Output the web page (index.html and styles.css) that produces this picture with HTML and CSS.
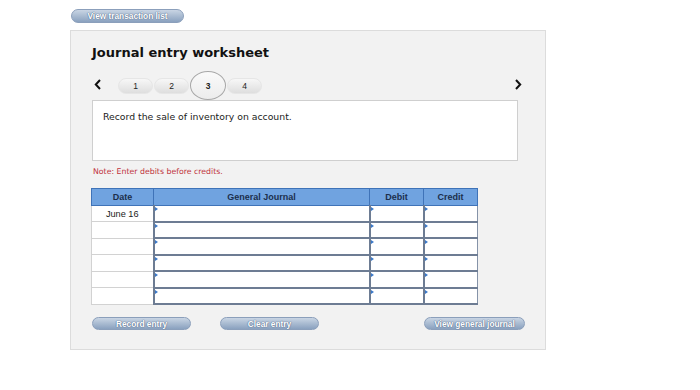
FILE: index.html
```html
<!DOCTYPE html>
<html>
<head>
<meta charset="utf-8">
<link rel="stylesheet" href="styles.css">
</head>
<body>
<div class="top">
  <span class="pill-btn top-btn">View transaction list</span>
</div>
<div class="panel">
  <h1 class="title">Journal entry worksheet</h1>
  <div class="nav">
    <svg class="chev" width="8" height="11" viewBox="0 0 8 11"><path d="M6 1 L1.8 5.5 L6 10" fill="none" stroke="#111" stroke-width="2"/></svg>
    <div class="tabs">
      <span class="tab">1</span>
      <span class="tab">2</span>
      <span class="tab active">3</span>
      <span class="tab">4</span>
    </div>
    <svg class="chev right" width="8" height="11" viewBox="0 0 8 11"><path d="M2 1 L6.2 5.5 L2 10" fill="none" stroke="#111" stroke-width="2"/></svg>
  </div>
  <div class="prompt">Record the sale of inventory on account.</div>
  <div class="note">Note: Enter debits before credits.</div>
  <table class="journal">
    <colgroup><col class="c-date"><col class="c-gj"><col class="c-dr"><col class="c-cr"></colgroup>
    <thead>
      <tr><th>Date</th><th>General Journal</th><th>Debit</th><th>Credit</th></tr>
    </thead>
    <tbody>
      <tr><td class="date">June 16</td><td class="in"><div class="box"></div></td><td class="in"><div class="box"></div></td><td class="in"><div class="box"></div></td></tr>
      <tr><td class="date"></td><td class="in"><div class="box"></div></td><td class="in"><div class="box"></div></td><td class="in"><div class="box"></div></td></tr>
      <tr><td class="date"></td><td class="in"><div class="box"></div></td><td class="in"><div class="box"></div></td><td class="in"><div class="box"></div></td></tr>
      <tr><td class="date"></td><td class="in"><div class="box"></div></td><td class="in"><div class="box"></div></td><td class="in"><div class="box"></div></td></tr>
      <tr><td class="date"></td><td class="in"><div class="box"></div></td><td class="in"><div class="box"></div></td><td class="in"><div class="box"></div></td></tr>
      <tr><td class="date"></td><td class="in"><div class="box"></div></td><td class="in"><div class="box"></div></td><td class="in"><div class="box"></div></td></tr>
    </tbody>
  </table>
  <div class="actions">
    <span class="pill-btn act-btn">Record entry</span>
    <span class="pill-btn act-btn clear">Clear entry</span>
    <span class="pill-btn act-btn view">View general journal</span>
  </div>
</div>
</body>
</html>
```

FILE: styles.css
```css
html, body {
  margin: 0;
  padding: 0;
  background: #ffffff;
}
body {
  padding: 9px 0 0 70px;
  font-family: "DejaVu Sans", Verdana, sans-serif;
  color: #222;
}
.top {
  display: flex;
  height: 14px;
  padding-left: 1px;
}
.pill-btn {
  display: inline-flex;
  align-items: center;
  justify-content: center;
  box-sizing: border-box;
  height: 13px;
  border-radius: 7px;
  background: linear-gradient(#c9d5e4 0%, #a9bbd1 50%, #8aa1bf 100%);
  border: 1px solid #8b9fbb;
  color: #ffffff;
  font-family: "Liberation Sans", Arial, sans-serif;
  font-weight: bold;
  font-size: 8.3px;
  text-shadow: 0 0 1px #4f6586, 0 0 1px #4f6586;
  white-space: nowrap;
}
.top-btn {
  width: 113px;
  height: 14px;
}
.panel {
  margin-top: 7px;
  box-sizing: border-box;
  width: 476px;
  height: 320px;
  background: #f2f2f2;
  border: 1px solid #dcdcdc;
  padding: 0 0 0 21px;
}
.title {
  margin: 14px 0 0 0;
  font-family: "DejaVu Sans", Verdana, sans-serif;
  font-weight: bold;
  font-size: 13px;
  line-height: 16px;
  color: #111;
}
.nav {
  display: flex;
  align-items: center;
  height: 29px;
  margin-top: 10px;
  width: 430px;
}
.chev {
  display: block;
  margin-left: 2px;
  margin-top: -3px;
}
.chev.right {
  margin-left: auto;
  margin-right: 0;
}
.tabs {
  display: flex;
  align-items: center;
  gap: 1px;
  margin-left: 16px;
}
.tab {
  display: flex;
  align-items: center;
  justify-content: center;
  width: 35px;
  height: 16px;
  border-radius: 8px;
  background: linear-gradient(#f7f7f7, #dedede);
  border: 1px solid #e6e6e6;
  box-sizing: border-box;
  font-family: "Liberation Sans", Arial, sans-serif;
  font-size: 8.5px;
  color: #222;
}
.tab.active {
  width: 36px;
  height: 29px;
  border-radius: 50%;
  background: linear-gradient(#fafafa, #ececec);
  border: 1px solid #a8a8a8;
  font-weight: bold;
}
.prompt {
  box-sizing: border-box;
  width: 426px;
  height: 61px;
  background: #ffffff;
  border: 1px solid #cfcfcf;
  padding: 10px 0 0 10px;
  font-size: 9.3px;
  color: #222;
}
.note {
  margin-top: 6px;
  margin-left: 1px;
  font-size: 7.8px;
  color: #c0323c;
  line-height: 9px;
}
.journal {
  margin-top: 12px;
  margin-left: -1px;
  border-collapse: collapse;
  font-family: "Liberation Sans", Arial, sans-serif;
  table-layout: fixed;
  width: 386px;
}
.c-date { width: 62px; }
.c-gj { width: 216px; }
.c-dr { width: 54px; }
.c-cr { width: 54px; }
.journal th {
  background: #70a3e0;
  border: 1px solid #3f73b8;
  height: 16px;
  padding: 0;
  font-size: 9px;
  font-weight: bold;
  color: #1c2f4c;
}
.journal td {
  height: 14.5px;
  padding: 0;
  background: #ffffff;
}
.journal td.date {
  border: 1px solid #d2d2d2;
  font-size: 9.2px;
  text-align: center;
  color: #222;
}
.journal td.in {
  border: 1px solid #8593a8;
  border-left: 2px solid #6d7c93;
  border-bottom: 2px solid #6d7c93;
  position: relative;
}
.box {
  height: 14.5px;
}
.journal td.in::before {
  content: "";
  position: absolute;
  left: 0;
  top: 1px;
  border-left: 3px solid #3a78c8;
  border-top: 2px solid transparent;
  border-bottom: 2px solid transparent;
}
.actions {
  display: flex;
  margin-top: 12px;
  width: 433px;
}
.act-btn {
  width: 99px;
  height: 13px;
}
.act-btn.clear {
  margin-left: 29px;
}
.act-btn.view {
  margin-left: auto;
  width: 101px;
}
```
